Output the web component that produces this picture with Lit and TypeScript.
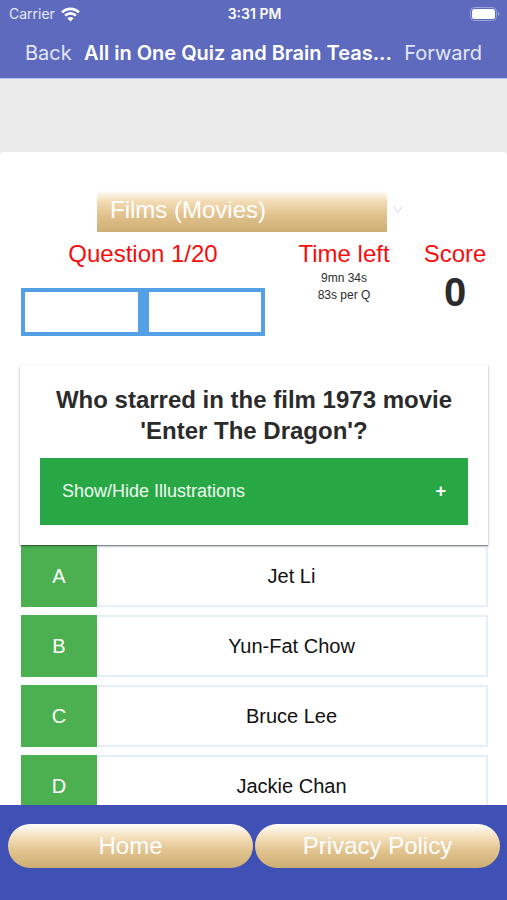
import { LitElement, html, css } from "lit";
import { customElement, state } from "lit/decorators.js";

interface Answer {
  letter: string;
  text: string;
}

const ANSWERS: Answer[] = [
  { letter: "A", text: "Jet Li" },
  { letter: "B", text: "Yun-Fat Chow" },
  { letter: "C", text: "Bruce Lee" },
  { letter: "D", text: "Jackie Chan" },
];

@customElement("status-bar")
class StatusBar extends LitElement {
  static styles = css`
    :host {
      display: grid;
      grid-template-columns: 1fr auto 1fr;
      align-items: center;
      height: 28px;
      padding: 0 7px 0 9px;
      font: 400 14px/28px Inter, "Liberation Sans", sans-serif;
      color: #e6e9fa;
    }
    .carrier {
      display: flex;
      align-items: center;
      gap: 6px;
    }
    .clock {
      font-weight: 600;
      color: #fff;
    }
    .battery {
      justify-self: end;
    }
    svg {
      display: block;
    }
  `;

  render() {
    return html`
      <div class="carrier">
        <span>Carrier</span>
        <svg width="19" height="15" viewBox="0 0 19 15" fill="none" stroke="#fff" stroke-width="2.6">
          <path d="M1 5.4C5.7 0.7 13.3 0.7 18 5.4" />
          <path d="M4.1 8.6C7.1 5.6 11.9 5.6 14.9 8.6" />
          <path d="M9.5 14.4L6.4 11.3C8.1 9.6 10.9 9.6 12.6 11.3Z" fill="#fff" stroke="none" />
        </svg>
      </div>
      <span class="clock">3:31 PM</span>
      <svg class="battery" width="30" height="14" viewBox="0 0 30 14">
        <rect x="0.5" y="0.5" width="26" height="13" rx="4" fill="none" stroke="#9aa3da" />
        <rect x="2" y="2" width="23" height="10" rx="2.5" fill="#fff" />
        <path d="M28 5Q29.6 5.6 29.6 7T28 9Z" fill="#9aa3da" />
      </svg>
    `;
  }
}

@customElement("app-root")
class AppRoot extends LitElement {
  @state() private open = false;

  static styles = css`
    :host {
      display: flex;
      flex-direction: column;
      height: 100vh;
      overflow: hidden;
      background: #ebebeb;
      font-family: "Liberation Sans", Arial, sans-serif;
      color: #2b2b2b;
    }
    * {
      box-sizing: border-box;
    }
    button,
    select {
      margin: 0;
      border: 0;
      border-radius: 0;
      font-family: inherit;
      cursor: pointer;
    }
    h1,
    h2,
    p {
      margin: 0;
    }

    .top {
      flex: none;
      background: #5d6abe;
      border-bottom: 1px solid #b3c6f2;
    }
    .nav {
      display: flex;
      align-items: center;
      justify-content: space-between;
      height: 50px;
      padding: 0 25px;
      font-family: Inter, "Liberation Sans", sans-serif;
    }
    .nav-button {
      flex: none;
      padding: 0;
      background: none;
      font-size: 20px;
      line-height: 24px;
      color: #e3e7fb;
    }
    .title {
      white-space: nowrap;
      font-size: 20px;
      font-weight: 600;
      line-height: 24px;
      color: #fff;
    }

    .content {
      flex: 1;
      min-height: 0;
      overflow: hidden;
      padding-top: 73px;
    }
    .sheet {
      min-height: 100%;
      padding: 39px 19px 0 20px;
      background: #fff;
      border-radius: 4px 4px 0 0;
    }

    .category {
      display: flex;
      align-items: center;
      gap: 6px;
      margin: 0 85px 0 77px;
    }
    .category-select {
      flex: 1;
      min-width: 0;
      height: 41px;
      padding: 0 13px 4px;
      appearance: none;
      background: linear-gradient(#fffdfa, #f3dcb5 25%, #e0c18c 60%, #cdae74);
      font-size: 24px;
      color: #fff;
    }
    .chevron {
      flex: none;
      margin-bottom: 4px;
    }

    .stats {
      display: grid;
      grid-template-columns: minmax(0, 1fr) 158px 64px;
      padding: 8px 1px 0 1px;
      text-align: center;
    }
    .label {
      font-size: 24px;
      font-weight: 400;
      line-height: 28px;
      white-space: nowrap;
      color: #f60d0d;
    }
    .progress {
      display: grid;
      grid-template-columns: 1fr 1fr;
      gap: 11px;
      height: 48px;
      margin-top: 20px;
      padding: 4px;
      background: #54a0e6;
    }
    .step {
      background: #fff;
    }
    .time {
      font-size: 12px;
      line-height: 17px;
      padding-top: 2px;
    }
    .score {
      font-size: 40px;
      font-weight: 700;
      line-height: 48px;
    }

    .question {
      position: relative;
      margin-top: 29px;
      padding: 19px 20px 20px;
      background: #fff;
      box-shadow: 0 1px 3px rgba(0, 0, 0, 0.22), 0 1px 1px rgba(0, 0, 0, 0.3);
    }
    .question-text {
      font-size: 24px;
      font-weight: 700;
      line-height: 31px;
      text-align: center;
    }
    .toggle {
      display: flex;
      align-items: center;
      justify-content: space-between;
      width: 100%;
      height: 67px;
      margin-top: 12px;
      padding: 0 22px;
      background: #28a745;
      font-size: 18px;
      color: #eefbf0;
    }
    .sign {
      font-weight: 700;
      color: #fff;
    }

    .answers {
      display: grid;
      gap: 8px;
      padding-left: 1px;
    }
    .answer {
      display: grid;
      grid-template-columns: 76px 1fr;
      height: 62px;
      padding: 0;
      background: #fff;
      font-size: 20px;
      line-height: 24px;
      color: #111;
    }
    .letter,
    .answer-text {
      display: grid;
      place-items: center;
      height: 100%;
    }
    .letter {
      background: #4caf50;
      color: #fff;
    }
    .answer-text {
      border: 2px solid #e3effa;
      border-left: 0;
    }

    .footer {
      flex: none;
      display: grid;
      grid-template-columns: 1fr 1fr;
      gap: 2px;
      height: 95px;
      padding: 19px 7px 0 8px;
      background: #3f51b5;
    }
    .pill {
      display: grid;
      place-items: center;
      height: 44px;
      border-radius: 22px;
      background: linear-gradient(#fffefb, #f4dfba 30%, #e2c490 60%, #cdae74);
      font-size: 24px;
      text-decoration: none;
      color: #fff;
    }
  `;

  private toggle() {
    this.open = !this.open;
  }

  render() {
    return html`
      <header class="top">
        <status-bar></status-bar>
        <nav class="nav">
          <button class="nav-button">Back</button>
          <h1 class="title">All in One Quiz and Brain Teas...</h1>
          <button class="nav-button">Forward</button>
        </nav>
      </header>

      <main class="content">
        <div class="sheet">
          <div class="category">
            <select class="category-select" aria-label="Category">
              <option>Films (Movies)</option>
            </select>
            <svg class="chevron" width="10" height="8" viewBox="0 0 10 8" fill="none" stroke="#d5d5d5">
              <path d="M1 0.5L5 6.5L9 0.5" />
            </svg>
          </div>

          <section class="stats">
            <div>
              <p class="label">Question 1/20</p>
              <div class="progress">
                <div class="step"></div>
                <div class="step"></div>
              </div>
            </div>
            <div>
              <p class="label">Time left</p>
              <div class="time">
                <p>9mn 34s</p>
                <p>83s per Q</p>
              </div>
            </div>
            <div>
              <p class="label">Score</p>
              <p class="score">0</p>
            </div>
          </section>

          <section class="question">
            <h2 class="question-text">Who starred in the film 1973 movie 'Enter The Dragon'?</h2>
            <button class="toggle" aria-expanded=${this.open} @click=${this.toggle}>
              <span>Show/Hide Illustrations</span>
              <span class="sign">${this.open ? "−" : "+"}</span>
            </button>
          </section>

          <div class="answers">
            ${ANSWERS.map(
              (a) => html`
                <button class="answer">
                  <span class="letter">${a.letter}</span>
                  <span class="answer-text">${a.text}</span>
                </button>
              `
            )}
          </div>
        </div>
      </main>

      <footer class="footer">
        <a class="pill" href="#home">Home</a>
        <a class="pill" href="#privacy">Privacy Policy</a>
      </footer>
    `;
  }
}
